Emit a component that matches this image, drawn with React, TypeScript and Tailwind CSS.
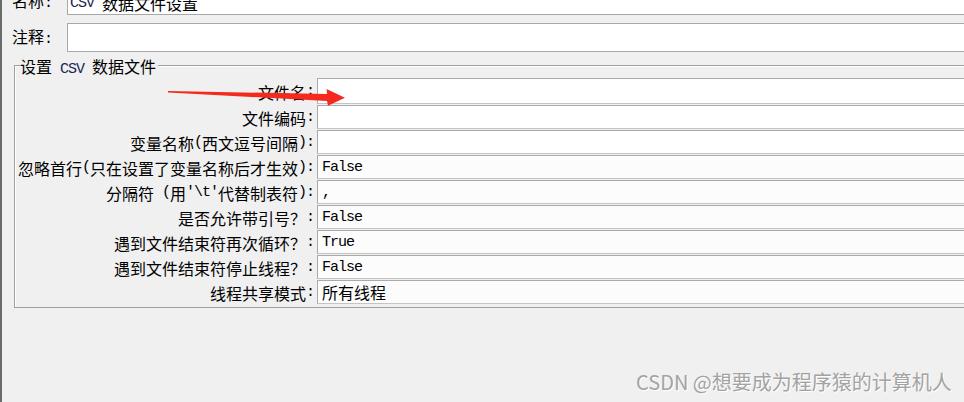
import React from "react";

type Row = { label: string; value: string; kind?: "mono" | "cjk"; first?: boolean };

const rows: Row[] = [
  { label: "文件名:", value: "", first: true },
  { label: "文件编码:", value: "" },
  { label: "变量名称(西文逗号间隔):", value: "" },
  { label: "忽略首行(只在设置了变量名称后才生效):", value: "False", kind: "mono" },
  { label: "分隔符 (用'\\t'代替制表符):", value: ",", kind: "mono" },
  { label: "是否允许带引号？:", value: "False", kind: "mono" },
  { label: "遇到文件结束符再次循环？:", value: "True", kind: "mono" },
  { label: "遇到文件结束符停止线程？:", value: "False", kind: "mono" },
  { label: "线程共享模式:", value: "所有线程", kind: "cjk" },
];

function Mixed({ text, tint }: { text: string; tint?: boolean }) {
  const parts = text.match(/[\x20-\x7e]+|[^\x20-\x7e]+/g) ?? [];
  return (
    <>
      {parts.map((p, i) =>
        /^[\x20-\x7e]+$/.test(p) ? (
          <span
            key={i}
            className={`whitespace-pre font-['Liberation_Mono',monospace] text-[15px] tracking-[-1px] ${
              tint ? "text-[#1d2452]" : ""
            }`}
          >
            {p}
          </span>
        ) : (
          <span key={i} className="font-['Noto_Sans_CJK_SC',sans-serif] text-[16px]">
            {p}
          </span>
        )
      )}
    </>
  );
}

export default function App() {
  return (
    <div className="relative flex w-[964px] h-[402px] overflow-hidden bg-[#f0f0f0] text-black font-['Noto_Sans_CJK_SC',sans-serif] text-[16px]">
      <div className="w-[2px] shrink-0 bg-[#6b6b6b]" />
      <div className="flex flex-1 flex-col">
        {/* 名称 */}
        <div className="mt-[-12px] flex h-[27px] items-center">
          <div className="w-[65px] shrink-0 pl-[10px] leading-none">
            <Mixed text="名称:" />
          </div>
          <div className="mr-[-10px] flex h-full flex-1 items-center border border-[#a8a8a8] bg-white pl-[2px] pt-[3px] leading-none">
            <Mixed text="CSV 数据文件设置" tint />
          </div>
        </div>
        {/* 注释 */}
        <div className="mt-[8px] flex h-[29px] items-center">
          <div className="w-[65px] shrink-0 pl-[10px] leading-none">
            <Mixed text="注释:" />
          </div>
          <div className="mr-[-10px] h-full flex-1 border border-[#a8a8a8] bg-white" />
        </div>
        {/* group */}
        <div className="relative ml-[12px] mr-[-20px] mt-[13px] h-[243px] border border-[#a0a0a0] shadow-[inset_1px_1px_0_#ffffff]">
          <div className="absolute left-[5px] top-[-9px] bg-[#f0f0f0] pr-[2px] leading-[18px]">
            <Mixed text="设置 CSV 数据文件" tint />
          </div>
          <div className="flex flex-col pt-[12px]">
            {rows.map((r, i) => (
              <div key={i} className={`flex ${r.first ? "h-[27px]" : "h-[25px]"}`}>
                <div className="flex w-[302px] shrink-0 items-center justify-end whitespace-nowrap pr-[3px] leading-none">
                  <Mixed text={r.label} />
                </div>
                <div
                  className={`mb-px flex flex-1 items-center border border-[#aaaaaa] border-b-[#c4c4c4] pl-[4px] leading-none ${
                    r.value ? "bg-[#fcfcfc]" : "bg-white"
                  }`}
                >
                  {r.kind === "mono" && (
                    <span className="font-['Liberation_Mono',monospace] text-[15px] tracking-[-1px]">{r.value}</span>
                  )}
                  {r.kind === "cjk" && <span>{r.value}</span>}
                </div>
              </div>
            ))}
          </div>
        </div>
      </div>

      {/* red arrow annotation */}
      <svg className="pointer-events-none absolute left-0 top-0" width="964" height="402" viewBox="0 0 964 402">
        <polygon
          points="168,91 327,94 326.5,89 345,97.7 328,105.7 327,101 168,92.5"
          fill="#f52a1e"
        />
      </svg>

      {/* watermark */}
      <div className="pointer-events-none absolute left-[636px] top-[369px] whitespace-nowrap text-[20px] leading-[26px] text-[#a3a3a3] [text-shadow:1px_1px_0_#ffffff]">
        CSDN @想要成为程序猿的计算机人
      </div>
    </div>
  );
}
